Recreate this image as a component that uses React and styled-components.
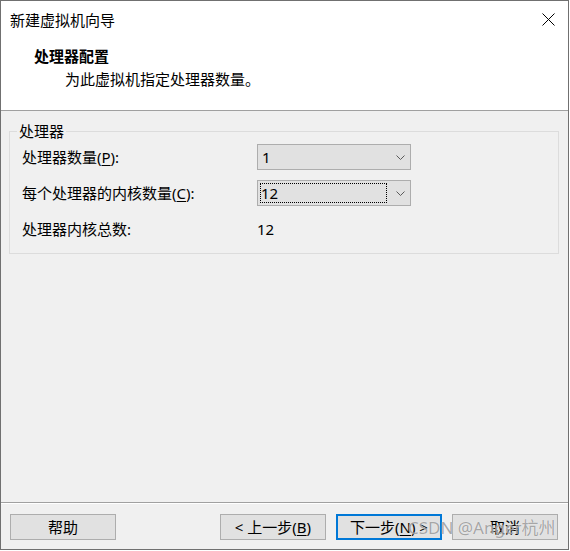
import React from "react";
import styled, { createGlobalStyle } from "styled-components";

const GlobalStyle = createGlobalStyle`
  html, body { margin: 0; padding: 0; background: #ffffff; }
  body {
    font-family: "Noto Sans", "Noto Sans CJK SC", sans-serif;
    font-size: 15px;
    color: #000;
  }
  * { box-sizing: border-box; }
`;

const Window = styled.div`
  position: relative;
  width: 569px;
  height: 550px;
  border: 1px solid #707070;
  background: #f0f0f0;
  display: flex;
  flex-direction: column;
`;

const Top = styled.div`
  height: 110px;
  background: #ffffff;
  border-bottom: 1px solid #a0a0a0;
  display: flex;
  flex-direction: column;
`;

const TitleBar = styled.div`
  height: 37px;
  display: flex;
  align-items: center;
  justify-content: space-between;
  padding: 0 13px 0 9px;
  line-height: 20px;
`;

const CloseIcon = styled.svg`
  width: 13px;
  height: 13px;
  display: block;
`;

const Header = styled.div`
  display: flex;
  flex-direction: column;
  gap: 3px;
  padding: 8px 0 0 33px;
`;

const HeaderTitle = styled.div`
  font-weight: bold;
  line-height: 20px;
`;

const HeaderSub = styled.div`
  line-height: 20px;
  padding-left: 31px;
`;

const Main = styled.div`
  flex: 1;
  padding: 10px 9px 0 8px;
`;

const Group = styled.fieldset`
  margin: 0;
  padding: 3px 12px 11px 12px;
  border: 1px solid #dcdcdc;
  min-width: 0;
`;

const Legend = styled.legend`
  padding: 0 2px;
  margin-left: -5px;
  line-height: 20px;
`;

const Grid = styled.div`
  display: grid;
  grid-template-columns: 235px 154px;
  grid-auto-rows: 26px;
  row-gap: 10px;
  align-items: center;
`;

const Label = styled.div`
  line-height: 20px;
  white-space: nowrap;
`;

const U = styled.span`
  text-decoration: underline;
  text-underline-offset: 2px;
`;

const Combo = styled.div`
  height: 26px;
  background: #e1e1e1;
  border: 1px solid #adadad;
  display: flex;
  align-items: center;
  justify-content: space-between;
  padding: ${(p) => (p.$focused ? "0 5px 0 2px" : "0 5px 0 4px")};
`;

const ComboValue = styled.div`
  line-height: 20px;
  ${(p) =>
    p.$focused
      ? `
    width: 127px;
    height: 20px;
    border: 1px dotted #000;
    padding-left: 0;
    line-height: 18px;
  `
      : ""}
`;

const Chevron = styled.svg`
  width: 9px;
  height: 5px;
  display: block;
`;

const Footer = styled.div`
  height: 47px;
  border-top: 1px solid #a0a0a0;
  box-shadow: inset 0 1px 0 #ffffff;
  display: flex;
  align-items: flex-start;
  padding: 11px 10px 0 9px;
`;

const Spacer = styled.div`
  flex: 1;
`;

const ButtonGroup = styled.div`
  display: flex;
  gap: 10px;
`;

const Button = styled.div`
  width: 106px;
  height: 26px;
  background: #e1e1e1;
  border: ${(p) => (p.$primary ? "2px solid #0078d7" : "1px solid #adadad")};
  display: flex;
  align-items: center;
  justify-content: center;
  line-height: 20px;
  white-space: nowrap;
`;

const Watermark = styled.div`
  position: absolute;
  left: 407px;
  top: 516px;
  font-size: 17px;
  line-height: 22px;
  color: rgba(110, 110, 110, 0.6);
  text-shadow: 0 0 1px rgba(255, 255, 255, 0.9);
  white-space: nowrap;
  pointer-events: none;
`;

const ChevronIcon = () => (
  <Chevron viewBox="0 0 9 5">
    <polyline points="0.5,0.5 4.5,4.5 8.5,0.5" fill="none" stroke="#5a5a5a" strokeWidth="1" />
  </Chevron>
);

export default function App() {
  return (
    <>
      <GlobalStyle />
      <Window>
        <Top>
          <TitleBar>
            <span>新建虚拟机向导</span>
            <CloseIcon viewBox="0 0 13 13">
              <line x1="0.5" y1="0.5" x2="12.5" y2="12.5" stroke="#000" strokeWidth="1" />
              <line x1="12.5" y1="0.5" x2="0.5" y2="12.5" stroke="#000" strokeWidth="1" />
            </CloseIcon>
          </TitleBar>
          <Header>
            <HeaderTitle>处理器配置</HeaderTitle>
            <HeaderSub>为此虚拟机指定处理器数量。</HeaderSub>
          </Header>
        </Top>
        <Main>
          <Group>
            <Legend>处理器</Legend>
            <Grid>
              <Label>
                处理器数量(<U>P</U>):
              </Label>
              <Combo>
                <ComboValue>1</ComboValue>
                <ChevronIcon />
              </Combo>
              <Label>
                每个处理器的内核数量(<U>C</U>):
              </Label>
              <Combo $focused>
                <ComboValue $focused>12</ComboValue>
                <ChevronIcon />
              </Combo>
              <Label>处理器内核总数:</Label>
              <Label>12</Label>
            </Grid>
          </Group>
        </Main>
        <Footer>
          <Button>帮助</Button>
          <Spacer />
          <ButtonGroup>
            <Button>
              &lt; 上一步(<U>B</U>)
            </Button>
            <Button $primary>
              下一步(<U>N</U>) &gt;
            </Button>
            <Button>取消</Button>
          </ButtonGroup>
        </Footer>
        <Watermark>CSDN @Anger杭州</Watermark>
      </Window>
    </>
  );
}
